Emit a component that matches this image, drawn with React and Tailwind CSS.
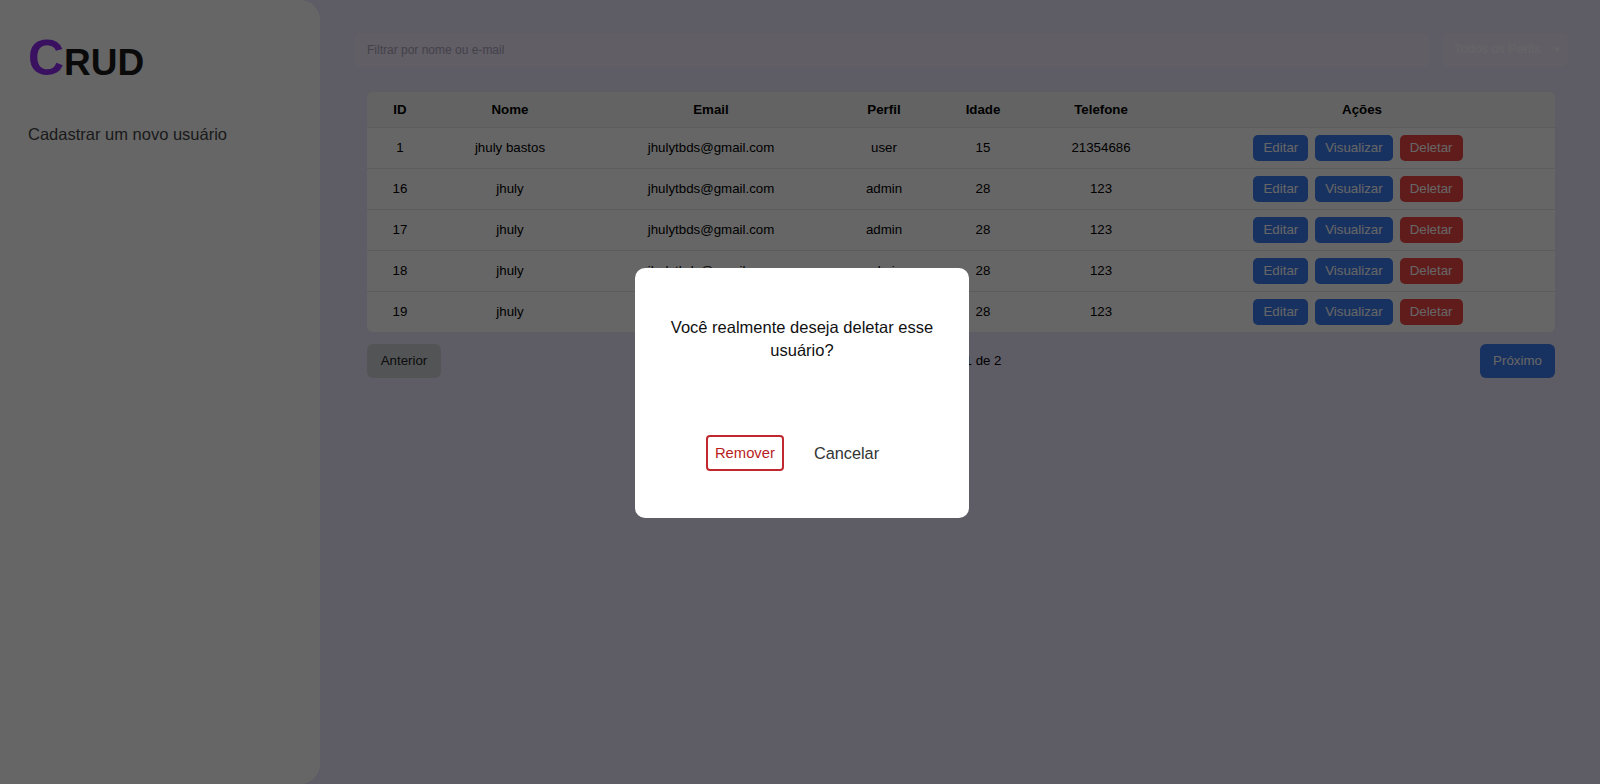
import { useState } from 'react';

const users = [
  { id: 1, nome: 'jhuly bastos', email: 'jhulytbds@gmail.com', perfil: 'user', idade: 15, telefone: '21354686' },
  { id: 16, nome: 'jhuly', email: 'jhulytbds@gmail.com', perfil: 'admin', idade: 28, telefone: '123' },
  { id: 17, nome: 'jhuly', email: 'jhulytbds@gmail.com', perfil: 'admin', idade: 28, telefone: '123' },
  { id: 18, nome: 'jhuly', email: 'jhulytbds@gmail.com', perfil: 'admin', idade: 28, telefone: '123' },
  { id: 19, nome: 'jhuly', email: 'jhulytbds@gmail.com', perfil: 'admin', idade: 28, telefone: '123' },
];

const Sidebar = () => (
  <aside className="w-[320px] shrink-0 bg-white rounded-r-[20px] pl-[28px] pt-[33px]">
    <h1 className="leading-none font-bold text-[#1a1a1a]">
      <span className="text-[50px] text-[#8f2cf0]">C</span>
      <span className="text-[37px]">RUD</span>
    </h1>
    <p className="mt-[41px] text-[16.5px] leading-[20px] text-[#444]">Cadastrar um novo usuário</p>
  </aside>
);

const UsersTable = () => (
  <div className="mx-[13px] mt-[25px] rounded-md overflow-hidden bg-white">
    <table className="w-full border-collapse text-[13.3px] text-black">
      <thead>
        <tr className="h-[35px] bg-[#f6f8f5]">
          <th className="w-[66px] pt-[2px] font-bold">ID</th>
          <th className="w-[154px] pt-[2px] font-bold">Nome</th>
          <th className="w-[248px] pt-[2px] font-bold">Email</th>
          <th className="w-[98px] pt-[2px] font-bold">Perfil</th>
          <th className="w-[100px] pt-[2px] font-bold">Idade</th>
          <th className="w-[136px] pt-[2px] font-bold">Telefone</th>
          <th className="pt-[2px] font-bold">Ações</th>
        </tr>
      </thead>
      <tbody>
        {users.map((u) => (
          <tr key={u.id} className="h-[41px] border-t border-[#e5e7eb] text-center">
            <td>{u.id}</td>
            <td>{u.nome}</td>
            <td>{u.email}</td>
            <td>{u.perfil}</td>
            <td>{u.idade}</td>
            <td>{u.telefone}</td>
            <td>
              <div className="flex justify-center gap-[7px] pr-[8px]">
                <button className="h-[26px] px-[10px] rounded-[5px] bg-[#3b7bf0] text-white">Editar</button>
                <button className="h-[26px] px-[10px] rounded-[5px] bg-[#3b7bf0] text-white">Visualizar</button>
                <button className="h-[26px] px-[10px] rounded-[5px] bg-[#ef4444] text-white">Deletar</button>
              </div>
            </td>
          </tr>
        ))}
      </tbody>
    </table>
  </div>
);

const DeleteModal = ({ onClose }) => (
  <div className="fixed inset-0 bg-black/60 flex items-center justify-center">
    <div className="relative left-[2px] top-[1px] w-[334px] h-[250px] bg-white rounded-[10px] px-[30px] pt-[48px] pb-[47px] flex flex-col items-center">
      <p className="text-center text-[16.5px] leading-[22.5px] text-[#111]">
        Você realmente deseja deletar esse usuário?
      </p>
      <div className="mt-[74px] mr-[4px] flex items-center gap-[15px]">
        <button className="h-[36px] px-[7px] border-2 border-[#c0282f] rounded-[4px] text-[14.8px] text-[#b91c1c]">
          Remover
        </button>
        <button onClick={onClose} className="h-[36px] px-[15px] text-[16.3px] text-[#333]">
          Cancelar
        </button>
      </div>
    </div>
  </div>
);

export default function App() {
  const [showModal, setShowModal] = useState(true);

  return (
    <div className="h-screen flex bg-[#ece6fc] font-['Liberation_Sans',Arial,sans-serif]">
      <Sidebar />
      <main className="flex-1 pl-[34px] pr-[32px] pt-[33px]">
        {/* Filters */}
        <div className="flex gap-[14px]">
          <input
            placeholder="Filtrar por nome ou e-mail"
            className="flex-1 h-[34px] rounded-md bg-[#f2eafe] px-[13px] text-[12px] placeholder:text-[#aaa4bb] outline-none"
          />
          <div className="w-[125px] h-[34px] rounded-md bg-[#f2ecfd] flex items-center justify-between pl-[11px] pr-[7px] text-[12.7px] text-[#fefdff]">
            <span>Todos os Perfis</span>
            <span className="text-[8px]">▼</span>
          </div>
        </div>

        <UsersTable />

        {/* Pagination */}
        <div className="mx-[13px] mt-[12px] flex items-center justify-between text-[13.3px]">
          <button className="h-[34px] w-[74px] rounded-md bg-[#cfd3d8] text-[#222]">Anterior</button>
          <span className="text-black">Página 1 de 2</span>
          <button className="h-[34px] w-[75px] rounded-md bg-[#3b7bf0] text-white">Próximo</button>
        </div>
      </main>

      {showModal && <DeleteModal onClose={() => setShowModal(false)} />}
    </div>
  );
}
